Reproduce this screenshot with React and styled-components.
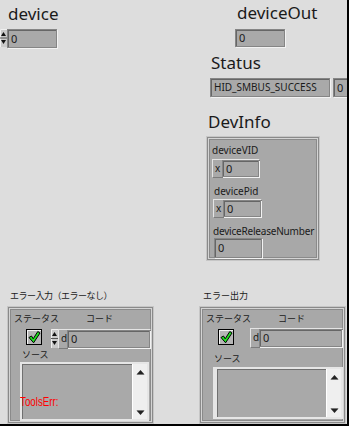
import React from "react";
import styled, { createGlobalStyle } from "styled-components";

const GlobalStyle = createGlobalStyle`
  html, body {
    margin: 0;
    padding: 0;
    background: #dddddd;
  }
  body {
    font-family: "Noto Sans", "Liberation Sans", Arial, sans-serif;
  }
`;

const Panel = styled.div`
  width: 347px;
  height: 424px;
  border-right: 2px solid #000;
  border-bottom: 2px solid #000;
  background: #dddddd;
  overflow: hidden;
  display: flex;
  flex-direction: column;
`;

const TopRow = styled.div`
  display: flex;
  height: 290px;
  flex-shrink: 0;
`;

const LeftCol = styled.div`
  width: 200px;
  flex-shrink: 0;
  padding-top: 4px;
  display: flex;
  flex-direction: column;
`;

const RightCol = styled.div`
  flex: 1;
  min-width: 0;
  padding-top: 3px;
  display: flex;
  flex-direction: column;
  align-items: flex-start;
`;

const BigLabel = styled.div`
  font-size: 17px;
  line-height: 20px;
  color: #1a1a1a;
  margin-left: ${(p) => p.$ml || 0}px;
  margin-top: ${(p) => p.$mt || 0}px;
  white-space: nowrap;
`;

const SmallLabel = styled.div`
  font-size: 10px;
  line-height: 12px;
  color: #1a1a1a;
  margin-left: ${(p) => p.$ml || 0}px;
  margin-top: ${(p) => p.$mt || 0}px;
  letter-spacing: ${(p) => p.$ls || 0}px;
  white-space: nowrap;
`;

const Row = styled.div`
  display: flex;
  align-items: flex-start;
  flex-shrink: 0;
  margin-left: ${(p) => p.$ml || 0}px;
  margin-top: ${(p) => p.$mt || 0}px;
`;

const NumField = styled.div`
  box-sizing: border-box;
  flex-shrink: 0;
  width: ${(p) => (p.$w ? `${p.$w}px` : "auto")};
  flex: ${(p) => (p.$grow ? 1 : "none")};
  height: ${(p) => p.$h || 19}px;
  margin-left: ${(p) => p.$ml || 0}px;
  margin-top: ${(p) => p.$mt || 0}px;
  background: #a9a9a9;
  border: 1px solid #858585;
  box-shadow: inset 1px 1px 0 #666666, 1px 1px 0 #f2f2f2;
  font-size: ${(p) => p.$fs || 11}px;
  line-height: ${(p) => (p.$h || 19) - 2}px;
  padding-left: 3px;
  color: #1a1a1a;
  white-space: nowrap;
  overflow: hidden;
`;

const RadixFrame = styled.div`
  box-sizing: border-box;
  display: flex;
  flex-shrink: 0;
  width: ${(p) => p.$w}px;
  height: ${(p) => p.$h || 19}px;
  margin-left: ${(p) => p.$ml || 0}px;
  margin-top: ${(p) => p.$mt || 0}px;
  border: 1px solid #e4e4e4;
  border-right-color: #7c7c7c;
  border-bottom-color: #7c7c7c;
  background: #a9a9a9;
`;

const Radix = styled.span`
  width: ${(p) => p.$w || 7}px;
  padding-left: 2px;
  font-size: 10px;
  line-height: 16px;
  color: #1a1a1a;
  flex-shrink: 0;
`;

const Cluster = styled.div`
  box-sizing: border-box;
  display: flex;
  flex-direction: column;
  align-items: flex-start;
  width: ${(p) => p.$w}px;
  height: ${(p) => p.$h}px;
  margin-left: ${(p) => p.$ml || 0}px;
  margin-top: ${(p) => p.$mt || 0}px;
  background: #a8a8a8;
  border: 1px solid #8a8a8a;
  box-shadow: inset 0 0 0 1px #d4d4d4, inset 0 0 0 2px #8a8a8a, 0 0 0 1px #c6c6c6;
  flex-shrink: 0;
`;

const BottomRow = styled.div`
  display: flex;
  align-items: flex-start;
  flex: 1;
`;

const ErrorGroup = styled.div`
  display: flex;
  flex-direction: column;
  flex-shrink: 0;
  margin-left: ${(p) => p.$ml}px;
`;

const JpLabel = styled.div`
  font-family: "Noto Sans CJK JP", "Noto Sans", sans-serif;
  font-size: 9px;
  line-height: 11px;
  color: #1a1a1a;
  white-space: nowrap;
  margin-left: ${(p) => p.$ml || 0}px;
  margin-top: ${(p) => p.$mt || 0}px;
  letter-spacing: ${(p) => p.$ls || 0}px;
`;

const ErrCluster = styled(Cluster)`
  height: 116px;
  width: 145px;
  margin-top: 6px;
  padding-top: 5px;
`;

const ErrHeader = styled.div`
  display: grid;
  grid-template-columns: 72px auto;
  padding-left: 5px;
`;

const CheckBox = styled.div`
  box-sizing: border-box;
  width: 16px;
  height: 16px;
  margin-left: 17px;
  margin-top: ${(p) => p.$mt || 0}px;
  border: 1px solid #000;
  background: #b6b6b6;
  box-shadow: inset 1px 1px 0 #f4f4f4;
  display: flex;
  align-items: center;
  justify-content: center;
  flex-shrink: 0;
`;

const CodeFrame = styled.div`
  box-sizing: border-box;
  display: flex;
  width: 93px;
  height: 20px;
  margin-left: ${(p) => p.$ml || 0}px;
  border: 1px solid #e4e4e4;
  border-right-color: #7c7c7c;
  border-bottom-color: #7c7c7c;
  background: #a9a9a9;
`;

const SourceBox = styled.div`
  box-sizing: border-box;
  display: flex;
  width: ${(p) => p.$w}px;
  height: ${(p) => p.$h}px;
  margin-left: ${(p) => p.$ml}px;
  margin-top: ${(p) => p.$mt}px;
  border: 2px solid #e6e6e6;
  border-left-width: ${(p) => p.$bl || 2}px;
  background: #a9a9a9;
`;

const TextArea = styled.div`
  flex: 1;
  box-shadow: inset 1px 1px 0 #707070;
  padding-top: 31px;
`;

const RedText = styled.div`
  font-family: "Liberation Sans", Arial, sans-serif;
  color: #ff0000;
  font-size: 13px;
  line-height: 13px;
  margin-left: -2px;
  transform: scaleX(0.75);
  transform-origin: left center;
  white-space: nowrap;
`;

const ScrollBar = styled.div`
  width: 15px;
  background: #efefef;
  border-left: 1px solid #ffffff;
  display: flex;
  flex-direction: column;
  justify-content: space-between;
  align-items: center;
  padding: 5px 0 3px;
  box-sizing: border-box;
`;

const Spinner = ({ h = 18 }) => (
  <svg width="7" height={h} viewBox={`0 0 7 ${h}`} style={{ display: "block", flexShrink: 0 }}>
    <rect x="0" y="0" width="7" height={h} fill="#c9c9c9" />
    <path d={`M0.5 ${h} V0.5 H7`} stroke="#f0f0f0" fill="none" />
    <line x1="0" y1={h / 2} x2="7" y2={h / 2} stroke="#555" />
    <polygon points="1,7 3.5,3 6,7" fill="#111" />
    <polygon points={`1,${h - 7} 6,${h - 7} 3.5,${h - 3}`} fill="#111" />
  </svg>
);

const Arrow = ({ down }) => (
  <svg width="9" height="6" viewBox="0 0 9 6" style={{ display: "block" }}>
    {down ? (
      <>
        <polygon points="0.5,0.5 8.5,0.5 4.5,5" fill="#222" />
        <line x1="1" y1="0.5" x2="8" y2="0.5" stroke="#777" />
      </>
    ) : (
      <>
        <polygon points="0.5,5.5 8.5,5.5 4.5,1" fill="#222" />
        <line x1="1" y1="5.5" x2="8" y2="5.5" stroke="#777" />
      </>
    )}
  </svg>
);

const Check = () => (
  <svg width="14" height="14" viewBox="0 0 14 14" style={{ display: "block" }}>
    <path
      d="M2 7.5 L4.5 6 L6.2 8.8 L10.8 1.5 L13 3 L6.6 12.8 Z"
      fill="#1fe01f"
      stroke="#000"
      strokeWidth="1"
      strokeLinejoin="round"
    />
  </svg>
);

const ErrorCluster = ({ control }) => (
  <ErrCluster>
    <ErrHeader>
      <JpLabel>ステータス</JpLabel>
      <JpLabel>コード</JpLabel>
    </ErrHeader>
    <Row $mt={control ? 5 : 4}>
      <CheckBox $mt={control ? 0 : 1}>
        <Check />
      </CheckBox>
      {control ? (
        <>
          <Row $ml={9}>
            <Spinner h={19} />
          </Row>
          <CodeFrame>
            <Radix $w={6}>d</Radix>
            <NumField $grow $h={18}>0</NumField>
          </CodeFrame>
        </>
      ) : (
        <CodeFrame $ml={16}>
          <Radix $w={6}>d</Radix>
          <NumField $grow $h={18}>0</NumField>
        </CodeFrame>
      )}
    </Row>
    <JpLabel $ml={13} $mt={control ? 0 : 5}>ソース</JpLabel>
    {control ? (
      <SourceBox $w={129} $h={59} $ml={11} $mt={2}>
        <TextArea>
          <RedText>ToolsErr:</RedText>
        </TextArea>
        <ScrollBar>
          <Arrow />
          <Arrow down />
        </ScrollBar>
      </SourceBox>
    ) : (
      <SourceBox $w={130} $h={52} $ml={12} $mt={3} $bl={4}>
        <TextArea />
        <ScrollBar>
          <Arrow />
          <Arrow down />
        </ScrollBar>
      </SourceBox>
    )}
  </ErrCluster>
);

export default function App() {
  return (
    <>
      <GlobalStyle />
      <Panel>
        <TopRow>
          <LeftCol>
            <BigLabel $ml={8}>device</BigLabel>
            <Row $mt={5}>
              <Spinner h={18} />
              <NumField $w={50}>0</NumField>
            </Row>
          </LeftCol>
          <RightCol>
            <BigLabel $ml={37}>deviceOut</BigLabel>
            <NumField $w={50} $h={18} $ml={35} $mt={6}>0</NumField>
            <BigLabel $ml={11} $mt={6}>Status</BigLabel>
            <Row $ml={10} $mt={5}>
              <NumField $w={120} $fs={10}>HID_SMBUS_SUCCESS</NumField>
              <NumField $w={20} $ml={3}>0</NumField>
            </Row>
            <BigLabel $ml={8} $mt={15}>DevInfo</BigLabel>
            <Cluster $w={112} $h={123} $ml={7} $mt={5}>
              <SmallLabel $ml={4} $mt={6}>deviceVID</SmallLabel>
              <RadixFrame $w={48} $ml={4} $mt={3}>
                <Radix>x</Radix>
                <NumField $grow $h={17}>0</NumField>
              </RadixFrame>
              <SmallLabel $ml={6} $mt={7}>devicePid</SmallLabel>
              <RadixFrame $w={49} $ml={5} $mt={2}>
                <Radix>x</Radix>
                <NumField $grow $h={17}>0</NumField>
              </RadixFrame>
              <SmallLabel $ml={5} $mt={7} $ls={-0.2}>deviceReleaseNumber</SmallLabel>
              <NumField $w={48} $h={20} $ml={6} $mt={1}>0</NumField>
            </Cluster>
          </RightCol>
        </TopRow>
        <BottomRow>
          <ErrorGroup $ml={8}>
            <JpLabel $ml={2} $ls={-0.5}>エラー入力（エラーなし）</JpLabel>
            <ErrorCluster control />
          </ErrorGroup>
          <ErrorGroup $ml={47}>
            <JpLabel $ml={3}>エラー出力</JpLabel>
            <ErrorCluster />
          </ErrorGroup>
        </BottomRow>
      </Panel>
    </>
  );
}
